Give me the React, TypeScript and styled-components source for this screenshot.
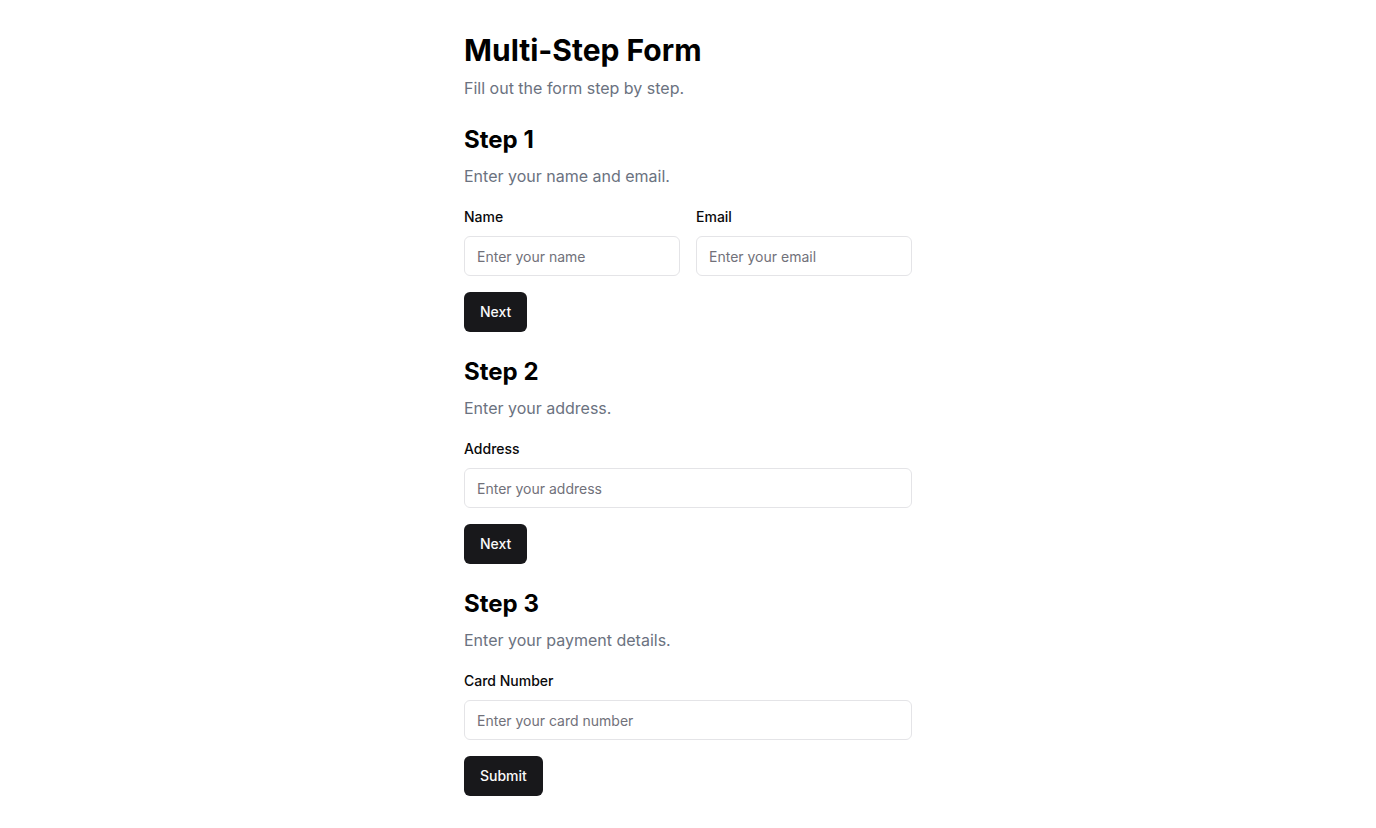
import React from "react";
import styled, { createGlobalStyle } from "styled-components";

const Global = createGlobalStyle`
  * { box-sizing: border-box; }
  body {
    margin: 0;
    background: #ffffff;
    font-family: Inter, "Noto Sans", sans-serif;
    color: #09090b;
  }
`;

const Page = styled.main`
  max-width: 448px;
  margin: 0 auto;
  padding-top: 32px;
  display: flex;
  flex-direction: column;
`;

const Title = styled.h1`
  margin: 0;
  font-size: 30px;
  line-height: 36px;
  font-weight: 700;
  color: #000000;
`;

const Subtitle = styled.p`
  margin: 8px 0 0;
  font-size: 16px;
  line-height: 24px;
  color: #6b7280;
`;

const Section = styled.section`
  margin-top: 24px;
  display: flex;
  flex-direction: column;
`;

const StepTitle = styled.h2`
  margin: 0;
  font-size: 24px;
  line-height: 32px;
  font-weight: 700;
  color: #000000;
`;

const StepDesc = styled.p`
  margin: 8px 0 0;
  font-size: 16px;
  line-height: 24px;
  color: #6b7280;
`;

const FieldRow = styled.div<{ $cols: number }>`
  margin-top: 19px;
  display: grid;
  grid-template-columns: repeat(${(p) => p.$cols}, 1fr);
  gap: 16px;
`;

const Field = styled.div`
  display: flex;
  flex-direction: column;
`;

const Label = styled.label`
  font-size: 14px;
  line-height: 20px;
  font-weight: 500;
  color: #09090b;
  margin-bottom: 9px;
`;

const Input = styled.input`
  height: 40px;
  width: 100%;
  border: 1px solid #e4e4e7;
  border-radius: 6px;
  padding: 0 12px;
  font-family: inherit;
  font-size: 14px;
  color: #09090b;
  background: #fff;
  outline: none;
  &::placeholder { color: #71717a; }
`;

const Button = styled.button`
  margin-top: 16px;
  align-self: flex-start;
  display: inline-flex;
  align-items: center;
  height: 40px;
  padding: 0 16px 1px;
  border: none;
  border-radius: 6px;
  background: #18181b;
  color: #fafafa;
  font-family: inherit;
  font-size: 14px;
  line-height: 20px;
  font-weight: 500;
  cursor: pointer;
`;

type FieldDef = { id: string; label: string; placeholder: string; type?: string };

const steps: { title: string; desc: string; fields: FieldDef[]; action: string }[] = [
  {
    title: "Step 1",
    desc: "Enter your name and email.",
    fields: [
      { id: "name", label: "Name", placeholder: "Enter your name" },
      { id: "email", label: "Email", placeholder: "Enter your email", type: "email" },
    ],
    action: "Next",
  },
  {
    title: "Step 2",
    desc: "Enter your address.",
    fields: [{ id: "address", label: "Address", placeholder: "Enter your address" }],
    action: "Next",
  },
  {
    title: "Step 3",
    desc: "Enter your payment details.",
    fields: [{ id: "card", label: "Card Number", placeholder: "Enter your card number" }],
    action: "Submit",
  },
];

export default function App() {
  return (
    <>
      <Global />
      <Page>
        <Title>Multi-Step Form</Title>
        <Subtitle>Fill out the form step by step.</Subtitle>
        {steps.map((s) => (
          <Section key={s.title}>
            <StepTitle>{s.title}</StepTitle>
            <StepDesc>{s.desc}</StepDesc>
            <FieldRow $cols={s.fields.length}>
              {s.fields.map((f) => (
                <Field key={f.id}>
                  <Label htmlFor={f.id}>{f.label}</Label>
                  <Input id={f.id} type={f.type ?? "text"} placeholder={f.placeholder} />
                </Field>
              ))}
            </FieldRow>
            <Button type="button">{s.action}</Button>
          </Section>
        ))}
      </Page>
    </>
  );
}
